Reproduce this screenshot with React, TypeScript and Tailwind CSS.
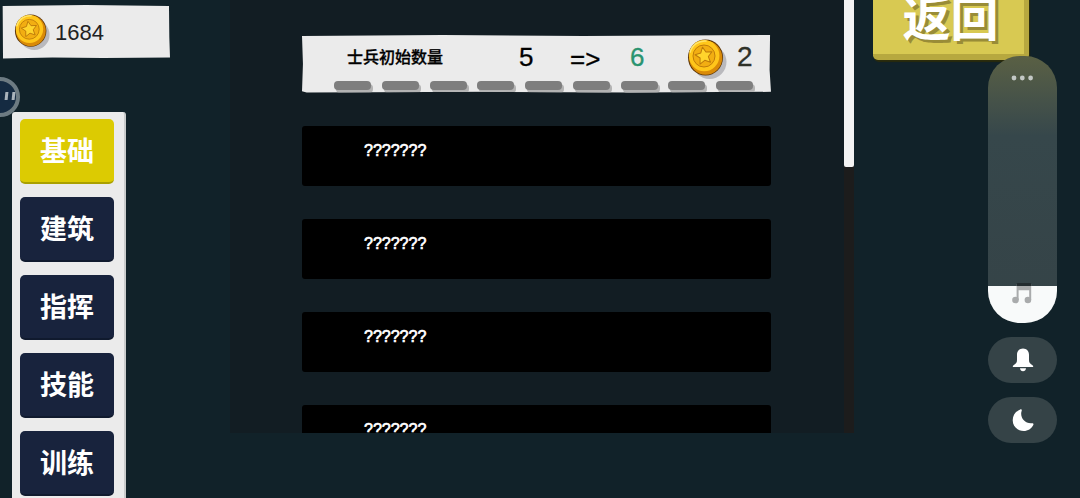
import { useState } from "react";

const TABS = ["基础", "建筑", "指挥", "技能", "训练"];
const STEPS = 9;
const LOCKED = [1, 2, 3, 4];

function Coin({ className }: { className: string }) {
  return (
    <svg viewBox="0 0 40 42" className={className} aria-hidden="true">
      <circle cx="22.5" cy="24" r="17" fill="#b9b9bd" />
      <ellipse cx="18.5" cy="19.5" rx="17.5" ry="18" fill="#5d3608" />
      <ellipse cx="18.7" cy="19.7" rx="16.6" ry="17" fill="#d98a08" />
      <ellipse cx="17.2" cy="17.700" rx="15.200" ry="15.600" fill="#ffc61a" />
      <path d="M3.200 14C5 7 12 2.400 19 3" fill="none" stroke="#ffe468" strokeWidth="1.600" strokeLinecap="round" />
      <circle cx="17" cy="18" r="11" fill="#f2ae12" stroke="#c07c0a" strokeWidth="1" />
      <path
        d="M0-9 2.600-3.600 8.600-2.800 4.200 1.300 5.300 7.300 0 4.400-5.300 7.300-4.200 1.300-8.600-2.800-2.600-3.600Z"
        transform="translate(17 18) rotate(-10)"
        fill="#ffd42c"
        stroke="#bd7a0a"
        strokeWidth="1"
        strokeLinejoin="round"
      />
    </svg>
  );
}

function UpgradeCard() {
  return (
    <article className="flex h-[58px] shrink-0 flex-col bg-[#ebebeb] [clip-path:polygon(0_1px,30%_0,60%_1px,99.8%_0,99.7%_60%,100%_98%,70%_99%,40%_98%,1%_99%,0_97%,0.2%_50%)]">
      <div className="flex h-11 items-center pr-4 pl-[45px] text-[26px] leading-none text-black">
        <h2 className="flex-1 pt-[2px] text-base leading-6 font-medium [-webkit-text-stroke:0.3px_#000]">士兵初始数量</h2>
        <span className="w-[51px] [-webkit-text-stroke:0.3px_#000]">5</span>
        <span className="w-[60px] pt-1 [-webkit-text-stroke:0.3px_#000]">=&gt;</span>
        <span className="w-[57px] text-[#2a9470] [-webkit-text-stroke:0.3px_#2a9470]">6</span>
        <Coin className="mt-1 h-[42px] w-10" />
        <span className="w-7 pl-[10px] text-[28px] text-[#2f3128] [-webkit-text-stroke:0.3px_#2f3128]">2</span>
      </div>
      <div className="flex justify-between pt-[2px] pr-[18px] pl-8">
        {Array.from({ length: STEPS }, (_, i) => (
          <span
            key={i}
            className="h-[9px] w-[37px] rounded-[4px] bg-[#7e7e7e] shadow-[2px_3px_0_#b3b3b3]"
          />
        ))}
      </div>
    </article>
  );
}

function LockedCard() {
  return (
    <article className="h-[60px] shrink-0 rounded-[3px] bg-black px-[62px] pt-[13px] text-base leading-6 text-white [-webkit-text-stroke:0.7px_#fff]">
      ???????
    </article>
  );
}

export default function App() {
  const [tab, setTab] = useState(0);
  const [volume, setVolume] = useState(14);

  return (
    <div className="relative flex h-screen overflow-hidden bg-[#112229] font-['Liberation_Sans','Noto_Sans_CJK_SC',sans-serif]">
      <aside className="flex w-[230px] shrink-0 flex-col items-start">
        <div className="mt-[5px] ml-[2px] flex h-[54px] w-[168px] shrink-0 items-center bg-[#ebebeb] pl-3 text-[22px] text-[#222] [clip-path:polygon(0.4%_1px,50%_0,99.4%_1px,99.6%_60%,100%_97%,60%_98%,30%_97%,0.6%_99%)]">
          <Coin className="h-[38px] w-9" />
          <span className="pl-[5px]">1684</span>
        </div>
        <nav
          aria-label="升级分类"
          className="mt-[53px] ml-3 flex shrink-0 flex-col gap-[13px] rounded-t-[3px] border-r-2 border-[#c9cbcb] bg-[#ebebeb] py-[7px] pr-[10px] pl-2"
        >
          {TABS.map((name, i) => (
            <button
              key={name}
              type="button"
              aria-pressed={i === tab}
              onClick={() => setTab(i)}
              className={
                i === tab
                  ? "h-[65px] w-[94px] rounded-[5px] border-b-2 border-[#aaa000] bg-[#dccb02] pt-1 text-[27px] font-bold text-white"
                  : "h-[65px] w-[94px] rounded-[5px] border-b-2 border-[#101a2e] bg-[#18233d] pt-1 text-[27px] font-bold text-white"
              }
            >
              {name}
            </button>
          ))}
        </nav>
      </aside>

      <main className="mb-[65px] flex min-w-0 flex-1 overflow-hidden bg-[#121d23]">
        <section className="flex min-w-0 flex-1 flex-col gap-[33px] pt-[35px] pr-[73px] pl-[72px]">
          <UpgradeCard />
          {LOCKED.map((n) => (
            <LockedCard key={n} />
          ))}
        </section>
        <div className="w-[10px] shrink-0 bg-[#1c1c1c]">
          <div className="h-[167px] rounded-b-[2px] bg-[#f3f3f3]" />
        </div>
      </main>

      <div className="w-[226px] shrink-0 pl-[19px]">
        <button
          type="button"
          className="-mt-5 h-20 w-[156px] rounded-[5px] border-r-[5px] border-b-[6px] border-[#b7a83f] bg-[#d8c952] pt-[5px] pl-1 text-5xl leading-none font-bold text-white shadow-[1px_2px_1px_#2a2b0c] [text-shadow:3px_3px_0_#998c37]"
        >
          返回
        </button>
      </div>

      <div className="absolute top-[77px] -left-5 flex h-10 w-10 items-center justify-end gap-1 rounded-full border-4 border-[#6d7b82] bg-[#152b42] pr-[1px] pb-[3px]">
        <span className="h-2 w-[3px] -skew-x-6 bg-[#a9b3bb]" />
        <span className="h-2 w-[3px] -skew-x-6 bg-[#a9b3bb]" />
      </div>

      <div className="absolute top-14 right-[23px] flex w-[69px] flex-col gap-[14px]">
        <div className="relative flex h-[267px] flex-col justify-end overflow-hidden rounded-[32px] bg-linear-to-b from-[#5a6044] via-[#36474b] via-30% to-[#354347]">
          <div className="bg-[#f8fafa]" style={{ height: `${volume}%` }} />
          <svg viewBox="0 0 24 6" className="absolute top-[19px] left-[23px] h-[6px] w-6 fill-[#c3c8c5]" aria-hidden="true">
            <circle cx="3" cy="3" r="2.400" />
            <circle cx="11.300" cy="3" r="2.400" />
            <circle cx="19.600" cy="3" r="2.400" />
          </svg>
          <svg viewBox="0 0 20 22" className="absolute bottom-[19px] left-6 h-[22px] w-5" aria-hidden="true">
            <path d="M4.600 2H19.200V18H17.200V8.200H6.600V18H4.600Z" fill="#a9abac" />
            <circle cx="3.500" cy="18" r="3.300" fill="#a9abac" />
            <circle cx="15.900" cy="18" r="3.300" fill="#a9abac" />
            <path d="M4.600 2Q4.600 1 5.600 1H18.200Q19.200 1 19.200 2V4H4.600Z" fill="#232c2f" />
          </svg>
          <input
            type="range"
            aria-label="音量"
            min={0}
            max={100}
            value={volume}
            onChange={(e) => setVolume(Number(e.target.value))}
            className="absolute inset-0 h-full w-full cursor-pointer opacity-0 [direction:rtl] [writing-mode:vertical-lr]"
          />
        </div>
        <button type="button" aria-label="响铃" className="flex h-[46px] items-center justify-center rounded-full bg-[#354347]">
          <svg viewBox="0 0 22 24" className="h-6 w-[22px] fill-white" aria-hidden="true">
            <path d="M11 .6C14.7.6 17 3.4 17 6.8V12C17 14.6 18 15.600 20.400 17.300 21.600 18.200 21.400 19 20.400 19H1.600C.6 19 .4 18.200 1.600 17.300 4 15.600 5 14.600 5 12V6.800C5 3.400 7.300.6 11 .6Z" />
            <path d="M8 20.300H14C13.800 22.200 12.700 23.300 11 23.300S8.200 22.200 8 20.300Z" />
          </svg>
        </button>
        <button type="button" aria-label="勿扰" className="flex h-[46px] items-center justify-center rounded-full bg-[#354347]">
          <svg viewBox="0 0 22 24" className="h-6 w-[22px] fill-white" aria-hidden="true">
            <path d="M8.200 1.400C9.300.9 10.200 1.600 9.700 2.700 7.500 9 12.300 16 20 15.300 21.200 15.200 21.800 16 21.300 17 19.500 20.700 15.900 23 11.700 23 5.600 23 .7 18.300.7 12.200.7 7.300 3.700 3.200 8.200 1.400Z" />
          </svg>
        </button>
      </div>
    </div>
  );
}
